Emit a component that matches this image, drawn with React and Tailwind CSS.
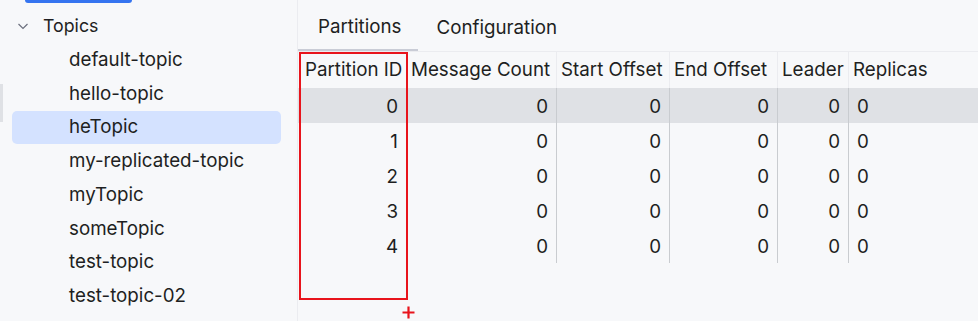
import React from 'react';

const topics = [
  'default-topic',
  'hello-topic',
  'heTopic',
  'my-replicated-topic',
  'myTopic',
  'someTopic',
  'test-topic',
  'test-topic-02',
];

const columns = [
  { label: 'Partition ID', width: 'w-[109px]', align: 'text-right' },
  { label: 'Message Count', width: 'w-[150px]', align: 'text-right' },
  { label: 'Start Offset', width: 'w-[113px]', align: 'text-right' },
  { label: 'End Offset', width: 'w-[108px]', align: 'text-right' },
  { label: 'Leader', width: 'w-[71px]', align: 'text-right' },
  { label: 'Replicas', width: 'flex-1', align: 'text-left' },
];

const partitions = [0, 1, 2, 3, 4];

export default function App() {
  return (
    <div className="relative flex h-[321px] w-[978px] overflow-hidden bg-[#f7f8fa] text-[18.75px] text-[#1e1f22] [font-family:Inter,'Noto_Sans',sans-serif]">
      {/* Sidebar */}
      <aside className="relative w-[298px] shrink-0 border-r border-[#ebecf0]">
        <div className="absolute left-[25px] top-0 h-[3px] w-[107px] rounded-b-sm bg-[#3574f0]" />
        <div className="absolute left-0 top-[84px] h-[38px] w-[3px] bg-[#dfe1e5]" />

        <div className="pt-[9px]">
          <div className="flex h-[34px] items-center pl-[17px]">
            <svg width="12" height="12" viewBox="0 0 12 12" className="mr-[14px]">
              <path d="M1.5 4 L6 8.5 L10.5 4" fill="none" stroke="#6c707e" strokeWidth="1.2" />
            </svg>
            <span className="text-[17.75px]">Topics</span>
          </div>
          <ul className="pr-[16px] pl-[12px]">
            {topics.map((t) => (
              <li
                key={t}
                className={`flex h-[33.75px] items-center rounded-[5px] pl-[57px] ${
                  t === 'heTopic' ? 'bg-[#d4e2ff]' : ''
                }`}
              >
                {t}
              </li>
            ))}
          </ul>
        </div>
      </aside>

      {/* Main panel */}
      <main className="relative flex-1">
        <div className="flex h-[52px] items-stretch border-b border-[#ebecf0] pt-[5px]">
          <div className="flex items-center border-b-2 border-[#c9ccd6] pr-[17px] pl-[20px]">Partitions</div>
          <div className="flex items-center px-[18px]">Configuration</div>
        </div>

        {/* Header */}
        <div className="flex h-[36px]">
          {columns.map((c) => (
            <div
              key={c.label}
              className={`${c.width} flex items-center whitespace-nowrap border-r border-[#ebecf0] px-[4px] first:pl-[7px] last:border-r-0`}
            >
              {c.label}
            </div>
          ))}
        </div>

        {/* Rows */}
        {partitions.map((p) => (
          <div key={p} className={`flex h-[35px] ${p === 0 ? 'bg-[#dfe1e5]' : ''}`}>
            {columns.map((c, i) => (
              <div
                key={c.label}
                className={`${c.width} ${c.align} flex items-center border-r border-[#c9ccd0] px-[8px] pt-[3px] last:border-r-0 ${
                  c.align === 'text-right' ? 'justify-end' : 'justify-start'
                }`}
              >
                {i === 0 ? p : 0}
              </div>
            ))}
          </div>
        ))}

        {/* Annotation */}
        <div className="pointer-events-none absolute left-[1px] top-[52px] h-[248px] w-[109px] border-2 border-[#e8141c]" />
        <svg
          width="13"
          height="13"
          viewBox="0 0 13 13"
          className="pointer-events-none absolute left-[104px] top-[306px]"
        >
          <path d="M6.5 0.5 V12.5 M0.5 6.5 H12.5" stroke="#e8141c" strokeWidth="2.2" />
        </svg>
      </main>
    </div>
  );
}
